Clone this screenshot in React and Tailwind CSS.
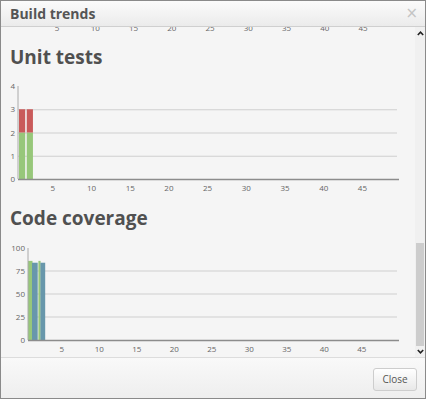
import React from 'react';

const ticks = [5, 10, 15, 20, 25, 30, 35, 40, 45];

const XLabels = ({ x0, step, y }) => (
  <g fill="#666" fontSize="8" textAnchor="middle">
    {ticks.map(t => (
      <text key={t} x={x0 + (t - 0.5) * step} y={y}>{t}</text>
    ))}
  </g>
);

const UnitTestsChart = () => {
  // page coords, svg starts at page x=1, y=70
  const yOf = v => 110 - v * 23.25;
  const bars = [
    { pass: 2, fail: 1 },
    { pass: 2, fail: 1 },
  ];
  return (
    <svg width="414" height="130" className="block shrink-0">
      <g transform="translate(-1,0)">
        {[1, 2, 3].map(v => (
          <line key={v} x1="18" x2="397" y1={yOf(v) + 0.5} y2={yOf(v) + 0.5} stroke="#cfcfcf" strokeWidth="1" />
        ))}
        {bars.map((b, i) => {
          const x = 19 + i * 7.74;
          return (
            <g key={i}>
              <rect x={x} y={yOf(b.pass)} width="6.2" height={yOf(0) - yOf(b.pass)} fill="#97c77a" />
              <rect x={x} y={yOf(b.pass + b.fail)} width="6.2" height={yOf(b.pass) - yOf(b.pass + b.fail)} fill="#c95a5a" />
            </g>
          );
        })}
        <line x1="18" x2="18" y1="17" y2="110" stroke="#aaa" strokeWidth="1" />
        <line x1="18" x2="399" y1="110.5" y2="110.5" stroke="#8c8c8c" strokeWidth="1.5" />
        <g fill="#666" fontSize="8" textAnchor="end">
          {[0, 1, 2, 3, 4].map(v => (
            <text key={v} x="15" y={yOf(v) + 3}>{v}</text>
          ))}
        </g>
        <XLabels x0={18} step={7.74} y={122} />
      </g>
    </svg>
  );
};

const CoverageChart = () => {
  // svg starts at page y=231
  const yOf = v => 110 - v * 0.92;
  return (
    <svg width="414" height="130" className="block shrink-0">
      <g transform="translate(-1,0)">
        {[25, 50, 75].map(v => (
          <line key={v} x1="28" x2="397" y1={yOf(v)} y2={yOf(v)} stroke="#e2e2e2" strokeWidth="2" />
        ))}
        <rect x="28" y={yOf(86)} width="4.5" height={yOf(0) - yOf(86)} fill="#97c77a" />
        <rect x="32" y={yOf(84)} width="5.7" height={yOf(0) - yOf(84)} fill="#6897ab" />
        <rect x="38.4" y={yOf(86)} width="2.2" height={yOf(0) - yOf(86)} fill="#97c77a" />
        <rect x="40.4" y={yOf(84)} width="4.8" height={yOf(0) - yOf(84)} fill="#6897ab" />
        <line x1="28" x2="28" y1="18" y2="110" stroke="#aaa" strokeWidth="1" />
        <line x1="28" x2="399" y1="110.5" y2="110.5" stroke="#8c8c8c" strokeWidth="1.5" />
        <g fill="#666" fontSize="8" textAnchor="end">
          {[0, 25, 50, 75, 100].map(v => (
            <text key={v} x="25" y={yOf(v) + 3}>{v}</text>
          ))}
        </g>
        <XLabels x0={28} step={7.5} y={122} />
      </g>
    </svg>
  );
};

const Chevron = ({ up }) => (
  <svg width="7" height="5" viewBox="0 0 7 5">
    <polyline
      points={up ? '0.8,4 3.5,1.2 6.2,4' : '0.8,1 3.5,3.8 6.2,1'}
      fill="none"
      stroke="#222"
      strokeWidth="1.6"
    />
  </svg>
);

export default function App() {
  return (
    <div className="w-[426px] h-[399px] border border-[#8a8a8a] flex flex-col bg-[#f5f5f5] font-['Open_Sans',sans-serif] overflow-hidden">
      <div className="h-[26px] shrink-0 border-b border-[#cfcfcf] bg-gradient-to-b from-[#fbfbfb] to-[#ebebeb] flex items-center justify-between pl-[9px] pr-[7px]">
        <span className="text-[14px] font-bold text-[#555] leading-none">Build trends</span>
        <span className="text-[15px] text-[#c4c4c4] leading-none font-['DejaVu_Sans',sans-serif]">×</span>
      </div>

      <div className="h-[330px] shrink-0 flex">
        <div className="flex-1 overflow-hidden flex flex-col">
          <svg width="414" height="6" className="block shrink-0">
            <g transform="translate(-1,0)">
              <XLabels x0={22.6} step={7.65} y={3.5} />
            </g>
          </svg>
          <h2 className="mt-[12px] ml-[9px] text-[19px] leading-[24px] font-bold text-[#505050]">Unit tests</h2>
          <UnitTestsChart />
          <h2 className="mt-[7px] ml-[9px] text-[19px] leading-[24px] font-bold text-[#505050]">Code coverage</h2>
          <CoverageChart />
        </div>
        <div className="w-[10px] shrink-0 bg-[#f0f0f0] flex flex-col">
          <div className="h-[12px] flex items-center justify-center pt-[1px]">
            <Chevron up />
          </div>
          <div className="flex-1 flex flex-col px-[1px]">
            <div className="mt-[204px] h-[103px] bg-[#cdcdcd]" />
          </div>
          <div className="h-[11px] flex items-center justify-center">
            <Chevron />
          </div>
        </div>
      </div>

      <div className="flex-1 border-t border-[#dcdcdc] bg-gradient-to-b from-[#f9f9f9] to-[#eeeeee] flex items-center justify-end pr-[8px] pt-[2px]">
        <button className="w-[44px] h-[23px] border border-[#cdcdcd] rounded-[3px] bg-gradient-to-b from-[#ffffff] to-[#e8e8e8] text-[10px] text-[#555] leading-none">
          Close
        </button>
      </div>
    </div>
  );
}
